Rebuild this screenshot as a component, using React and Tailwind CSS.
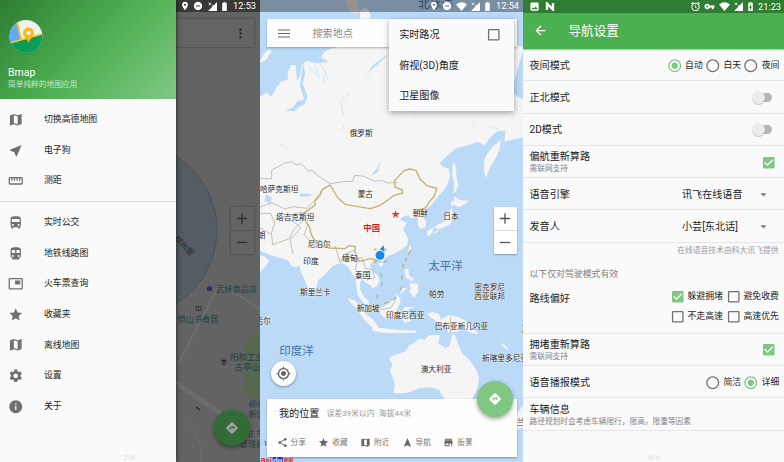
import React from "react";
import {
  MdMap, MdNearMe, MdStraighten, MdDirectionsBus, MdDirectionsSubway, MdPictureInPicture,
  MdStar, MdSettings, MdInfo, MdDirections, MdMyLocation, MdShare, MdNavigation, MdStore,
  MdMoreVert, MdLocationOn, MdDoNotDisturbOn, MdBatteryFull, MdBatteryChargingFull,
  MdAlarm, MdVpnKey, MdImage, MdArrowBack, MdCheckBox, MdCheckBoxOutlineBlank,
  MdRadioButtonChecked, MdRadioButtonUnchecked, MdArrowDropDown,
} from "react-icons/md";

const primaryItems = [
  [MdMap, "切换高德地图"],
  [MdNearMe, "电子狗"],
  [MdStraighten, "测距"],
];
const secondaryItems = [
  [MdDirectionsBus, "实时公交"],
  [MdDirectionsSubway, "地铁线路图"],
  [MdPictureInPicture, "火车票查询"],
  [MdStar, "收藏夹"],
  [MdMap, "离线地图"],
  [MdSettings, "设置"],
  [MdInfo, "关于"],
];

function Signal() {
  return (
    <svg className="h-[9px] w-[9px]" viewBox="0 0 9 9" fill="currentColor">
      <path d="M9 0V9H0L4.3 4.7V3.2H5.8Z" />
      <path d="M.6.6l2.6 2.6M3.2.6L.6 3.2" stroke="currentColor" strokeWidth=".8" />
    </svg>
  );
}

function Wifi() {
  return (
    <svg className="h-[9px] w-[11px]" viewBox="0 0 11 9" fill="currentColor">
      <path d="M0 2.4Q5.5-2 11 2.4L5.5 9Z" />
    </svg>
  );
}

function Plus() {
  return (
    <svg className="h-[23px] w-[12px]" viewBox="0 0 12 23" fill="none" stroke="currentColor" strokeWidth="1.3">
      <path d="M.8 11.500H11.200M6 6.300V16.700" />
    </svg>
  );
}

function Minus() {
  return (
    <svg className="h-[23px] w-[12px]" viewBox="0 0 12 23" fill="none" stroke="currentColor" strokeWidth="1.3">
      <path d="M.8 11.500H11.200" />
    </svg>
  );
}

function DrawerItem({ icon: Icon, label }) {
  return (
    <li className="flex h-[30.600px] items-center pl-[8px]">
      <Icon className="h-[15.500px] w-[15.500px] text-[#707070]" />
      <span className="ml-[20.500px] text-[8.900px] text-[#1c1c1c]">{label}</span>
    </li>
  );
}

function DimMap() {
  return (
    <svg className="absolute inset-0 h-full w-full" viewBox="176 0 84 462" fontSize="8.2">
      <rect x="176" width="84" height="462" fill="#636363" />
      <g stroke="#6d6d6d" fill="none">
        <path d="M176 383L236 424L260 437" strokeWidth="5" />
        <path d="M178 365L198 325L218 287L240 296L260 310" strokeWidth="2" />
        <path d="M180 415Q206 438 200 462" strokeWidth="1" />
      </g>
      <rect x="245" y="334" width="30" height="65" rx="10" fill="#56684f" />
      <circle cx="130" cy="230" r="87" fill="#535d63" stroke="#3c505c" strokeWidth=".8" />
      <text x="0" y="0" transform="translate(174 239) rotate(46)" fill="#2b2b2b" fontSize="8">柳州服</text>
      <g fill="#1f3f49">
        <text x="216" y="292.300">武妹食品店</text>
        <text x="177.500" y="322.300">倚山书香居</text>
        <text x="230" y="359.600" fontSize="8.500">阳和工业</text>
        <text x="234.500" y="370" fontSize="8.500">古亭山</text>
        <text x="248.500" y="407.300">柳州</text>
        <text x="248.500" y="417.300">新区</text>
        <text x="247.500" y="436.500">市市</text>
        <text x="239.500" y="446.500">管理处</text>
      </g>
      <path d="M207 287h5v4h-5z" fill="#352b60" />
      <path d="M208 287q1.500-3 3 0" fill="none" stroke="#352b60" strokeWidth=".8" />
      <circle cx="224" cy="362" r="4.500" fill="#555" stroke="#777" strokeWidth=".5" />
      <path d="M221.500 360h5l-2 2v3h-1v-3z" fill="#222" />
      <path d="M196 306.500h5v4h-5zM198.500 306.500v4" fill="none" stroke="#333" strokeWidth=".9" />
      <path d="M196 407l4 3" stroke="#222" strokeWidth="1.200" />
    </svg>
  );
}

function DrawerScreen() {
  return (
    <section className="flex h-full w-[260px] shrink-0 overflow-hidden">
      <aside className="relative z-10 flex w-[176px] shrink-0 flex-col bg-[#fafafa] shadow-[1px_0_4px_rgba(0,0,0,0.5)]">
        <header className="flex h-[99px] shrink-0 flex-col bg-[linear-gradient(135deg,#2e7d32_0%,#4caf50_50%,#81c784_100%)] pl-[8px] pt-[19px] text-white">
          <svg className="h-[36px] w-[36px]" viewBox="0 0 36 36">
            <defs>
              <clipPath id="logo"><circle cx="18" cy="17.500" r="16.500" /></clipPath>
            </defs>
            <circle cx="18" cy="18.700" r="16.500" fill="#1b5e20" opacity=".25" />
            <g clipPath="url(#logo)">
              <rect width="36" height="36" fill="#f1f1ee" />
              <path d="M0 0H9L14 21L0 25Z" fill="#64a9f1" />
              <path d="M8.500 0L13.500 22" stroke="#fbc928" strokeWidth="1.800" />
              <path d="M0 25L36 14.500V36H0Z" fill="#0b9d55" />
              <path d="M0 24.500L36 14.500" stroke="#fbc928" strokeWidth="1.600" />
            </g>
            <path d="M20.500 24C19.500 20 15 18.500 15 13.800a5.500 5.500 0 0 1 11 0C26 18.500 21.500 20 20.500 24Z" fill="#fbb917" />
            <circle cx="20.500" cy="13.800" r="2.100" fill="#fff" />
          </svg>
          <div className="mt-[11px] text-[10.500px] leading-[13px]">Bmap</div>
          <div className="mt-[0.500px] text-[7.700px] leading-[10px] text-[#c8e6c9]">简单纯粹的地图应用</div>
        </header>
        <ul className="border-b border-[#dcdcdc] pb-[4.700px] pt-[5.600px]">
          {primaryItems.map(([icon, label]) => <DrawerItem key={label} icon={icon} label={label} />)}
        </ul>
        <ul className="pt-[5.500px]">
          {secondaryItems.map(([icon, label]) => <DrawerItem key={label} icon={icon} label={label} />)}
        </ul>
        <div className="mt-auto pl-[123px] text-[8px] leading-[9px] text-[#dedede]">2/6</div>
      </aside>
      <div className="relative flex flex-1 flex-col overflow-hidden">
        <DimMap />
        <div className="relative flex h-[12px] shrink-0 items-center justify-end bg-[#383838] pr-[4px] text-white">
          <MdLocationOn className="h-[10px] w-[10px]" />
          <MdDoNotDisturbOn className="ml-[3px] h-[10px] w-[10px]" />
          <span className="ml-[5px]"><Signal /></span>
          <MdBatteryFull className="ml-[2px] h-[11px] w-[11px]" />
          <span className="ml-[3px] text-[9.200px] leading-none">12:53</span>
        </div>
        <div className="relative mr-[6px] mt-[7px] flex h-[28px] shrink-0 items-center justify-end bg-[#646464] pr-[6.500px] shadow-[0_0_2px_rgba(0,0,0,0.5)]">
          <MdMoreVert className="h-[15px] w-[15px] text-[#292929]" />
        </div>
        <div className="relative ml-[54.500px] mt-[160px] flex h-[47px] w-[23px] shrink-0 flex-col items-center bg-[#646464] text-[#2c2c2c] shadow-[0_0_2px_rgba(0,0,0,0.45)]">
          <Plus />
          <div className="h-px w-full bg-[#555]" />
          <Minus />
        </div>
        <div className="relative ml-[38px] mt-[156px] flex h-[36px] w-[36px] shrink-0 items-center justify-center rounded-full bg-[#326b36] text-[#a0a0a0] shadow-[0_2px_4px_rgba(0,0,0,0.4)]">
          <MdDirections className="h-[14px] w-[14px]" />
        </div>
      </div>
    </section>
  );
}

const countries = [
  [281, 400, "俄罗斯"], [12, 566, "哈萨克斯坦"], [305, 583, "蒙古"], [60, 652, "塔吉克斯坦"],
  [470, 638, "朝鲜"], [562, 649, "日本"], [-18, 706, "伊朗"], [155, 733, "尼泊尔"],
  [258, 773, "缅甸"], [142, 784, "印度"], [297, 826, "泰国"], [132, 877, "斯里兰卡"],
  [519, 881, "帕劳"], [655, 860, "密克罗尼"], [655, 887, "西亚联邦"], [302, 923, "新加坡"],
  [390, 946, "印度尼西亚"], [536, 977, "巴布亚新几内亚"], [678, 1075, "新喀里多尼亚"],
  [494, 1108, "澳大利亚"], [-24, 963, "塞舌尔"], [796, 988, "瓦努阿图"], [737, 1265, "新西兰"],
];
const oceans = [[487, 10, "北冰洋"], [517, 797, "太平洋"], [70, 1053, "印度洋"]];

function AsiaMap() {
  return (
    <svg className="absolute inset-0 h-full w-full" viewBox="12 0 789 1386" preserveAspectRatio="none">
      <rect width="810" height="1390" fill="#bbdaf8" />
      <g fill="#f5f5f5">
        <path d="M0 183L16 178L24 160L42 146L60 128L235 145L300 90L804 140V412L765 420L745 425L748 393L725 392L700 415L688 436L665 426L640 435L600 445L565 475L550 490L560 500L578 506L582 530L572 560L545 592L528 612L513 627L503 632L498 645L510 665L509 681L493 687L486 675L486 655L478 650L465 657L458 645L440 650L432 660L453 668L444 683L440 688L452 706L456 719L454 735L438 748L418 760L399 766L383 778L380 785L367 779L351 784L342 795L347 810L364 826L371 841L365 855L349 866L344 856L327 847L319 835L312 850L313 870L324 890L337 902L340 915L328 914L314 898L304 884L302 860L299 838L288 821L276 801L262 790L248 791L234 796L215 814L203 828L187 840L182 861L176 874L168 882L160 874L145 838L133 812L130 795L122 802L108 799L95 780L70 773L40 764L12 752L0 750Z" />
        <path d="M12 766L28 772L40 781L30 797L12 816L0 820V766Z" />
        <path d="M735 420L730 450L719 475L703 500L690 534L684 516L685 480L693 462L711 438Z" />
        <path d="M590 492L596 488L600 510L602 535L607 555L600 574L593 580L595 548L588 525Z" />
        <path d="M595 588L610 600L640 602L622 615L610 622L592 614L586 620L585 606L593 604ZM588 622L590 648L584 672L566 681L548 688L535 683L542 675L563 666L570 650ZM535 681L526 702L516 710L511 695ZM548 690L540 700L530 697Z" />
        <path d="M460 738L466 739L462 760L456 753ZM369 788L383 790L378 799L367 798ZM446 807L457 807L459 826L475 838L468 844L449 832ZM460 850L486 851L487 873L475 893L458 873L465 868ZM453 865L430 886L439 863Z" />
        <path d="M276 895L298 902L315 920L331 944L347 954L366 978L369 990L347 982L321 955L305 929L284 908Z" />
        <path d="M350 983L378 984L407 988L440 991L481 992L480 998L421 999L376 998L347 991Z" />
        <path d="M370 928L390 914L413 901L421 883L434 898L429 916L419 935L415 953L391 956L375 945Z" />
        <path d="M443 921L475 920L490 915L458 928L454 938L469 941L457 945L466 966L452 964L449 972L438 956L441 940Z" />
        <path d="M514 941L531 936L548 942L556 958L578 945L605 950L638 967L648 982L668 1001L648 1000L620 987L602 996L578 998L565 977L541 968L534 957L522 952Z" />
        <path d="M402 1070L425 1062L448 1054L460 1036L478 1026L491 1015L506 1020L520 1005L553 1005L546 1029L568 1044L580 1039L588 1005L596 1003L607 1034L618 1060L640 1079L661 1110L669 1134L663 1171L647 1198L600 1216L568 1197L558 1187L550 1170L525 1162L492 1164L463 1176L430 1181L413 1179L416 1152L402 1110L410 1092L400 1080Z" />
        <path d="M762 1257L783 1240L801 1217V1280L785 1290ZM740 1030l17 16-5 3-18-18z" />
        <path d="M312 33L322 24L334 26L345 45L340 56L312 56Z" />
      </g>
      <path d="M268 0L303 0L306 20L311 34L304 41L288 37L278 24Z" fill="#e6e0d8" />
      <g fill="#bbdaf8">
        <path d="M40 140H235L205 156L195 174L220 185L180 190L150 182L137 197L131 229L123 244L119 196L105 194L96 215L95 240L75 244L61 265L45 290L32 278L12 290V188L30 180L46 156Z" />
        <path d="M142 190L147 219L140 251L155 290L145 313L126 322L117 333L89 332L112 321L125 303L145 299L132 258L137 216Z" />
        <path d="M399 159L371 188L337 217L348 198L370 181ZM375 482L365 517L342 529L362 507ZM30 583L48 593L43 610L25 603ZM130 580L167 583L165 588L133 591ZM804 140V300L770 280L776 240Z" />
      </g>
      <g fill="none" stroke="#c7dff2" strokeWidth="2">
        <path d="M186 180L208 218L201 251M206 210L217 240M282 277L254 305L264 350M350 210L330 225M67 430L93 446M265 370L260 390M465 330L481 350M647 362L661 378M691 376L730 388M178 195L190 235M153 197L183 225" />
      </g>
      <g fill="none" stroke="#bdb6a6" strokeWidth="2.500" strokeLinejoin="round">
        <path d="M12 536L47 536V510L69 499L83 490L107 485L121 495L136 491L156 514L167 511L197 535L222 551L262 545L290 544L296 526L325 529L353 543L376 542L397 549L425 547M226 554L199 568L187 587L173 605L153 625L110 620L86 627L48 608L12 621M12 640L44 640L56 669L46 700L50 734L100 716L112 690L146 658M61 660L90 650L135 636L156 663M106 660L134 683L102 720L111 763M46 703L12 684M156 672L144 704L174 735M237 737L253 789L261 765L295 751M290 778L318 773L328 805L350 809L356 833L332 840M305 775L298 811M374 930L405 923L422 895M584 950L583 1000M480 630L491 648L507 649" />
      </g>
      <g fill="none" stroke="#bda65b" strokeWidth="4" strokeLinejoin="round" opacity=".85">
        <path d="M222 555L246 594L267 613L307 620L343 626L370 617L392 603L414 586L440 579L438 569L418 562L415 543L444 512L462 507L481 512L492 537L513 557L526 561L543 565L535 588L519 607L510 623L484 631M222 555L199 568L193 585L176 603L178 615L154 632L136 643L149 664L161 681L164 698L172 716L189 735L220 744L266 746L278 737L298 739L296 754L310 785L342 776L362 780L378 782" />
        <path d="M374 820l4 12M378 848l-2 10M363 884l2 12M384 910l14-3M412 900l8-10M434 870l4-10M436 838l3-12M439 805l4-12M448 784l5-11M458 764l5-15" />
      </g>
      <path d="M419 630l3 9h10l-8 6 3 9-8-6-8 6 3-9-8-6h10z" fill="#e23b3b" />
      <g fill="#222" stroke="#fff" strokeWidth="1.500" paintOrder="stroke" fontSize="23">
        {countries.map(([x, y, name]) => <text key={name} x={x} y={y + 8.5}>{name}</text>)}
        <text x="22" y="1337">1</text>
      </g>
      <text x="322" y="692" fontSize="25" fontWeight="700" fill="#d41f26">中国</text>
      <g fill="#4673a5" fontSize="34.500">
        {oceans.map(([x, y, name]) => <text key={name} x={x} y={y + 12.5}>{name}</text>)}
      </g>
      <path d="M383 736l3 24-20-6z" fill="#1e88e5" />
      <circle cx="372" cy="766" r="15" fill="#1687ef" stroke="#fff" strokeWidth="3" />
      <path d="M356 752v-5h6M390 752v-5h-6M356 781v5h6M390 781v5h-6" fill="none" stroke="#c39b55" strokeWidth="3" />
      <g fontSize="23" fontWeight="700">
        <text x="14" y="1389" fill="#df2f36">Bai</text>
        <rect x="50" y="1371" width="31" height="16" rx="4" fill="#3b45cf" />
        <text x="52" y="1389" fill="#e4e6fa">du</text>
        <text x="82" y="1387" fill="#df2f36" fontSize="15">地图</text>
      </g>
    </svg>
  );
}

const actions = [
  [MdShare, "分享"], [MdStar, "收藏"], [MdMap, "附近"], [MdNavigation, "导航"], [MdStore, "街景"],
];

function MapScreen() {
  return (
    <section className="relative flex h-full w-[263px] shrink-0 flex-col overflow-hidden">
      <AsiaMap />
      <div className="relative flex h-[12px] shrink-0 items-center justify-end bg-black/35 pr-[4px] text-white">
        <MdLocationOn className="h-[10px] w-[10px]" />
        <MdDoNotDisturbOn className="ml-[3px] h-[10px] w-[10px]" />
        <span className="ml-[4px]"><Wifi /></span>
        <span className="ml-[4px]"><Signal /></span>
        <MdBatteryFull className="ml-[2px] h-[11px] w-[11px]" />
        <span className="ml-[3px] text-[9.200px] leading-none">12:54</span>
      </div>
      <div className="relative ml-[6.500px] mt-[7px] flex h-[28px] w-[250px] shrink-0 items-center bg-[#fefefe] pl-[11.500px] shadow-[0_1px_2px_rgba(0,0,0,0.3)]">
        <svg className="h-[9px] w-[12px]" viewBox="0 0 12 9" fill="none" stroke="#666" strokeWidth="1.100">
          <path d="M0 1H12M0 4.500H12M0 8H12" />
        </svg>
        <span className="ml-[22.500px] pt-[1px] text-[10.100px] text-[#8c8c8c]">搜索地点</span>
      </div>
      <div className="relative ml-[233.500px] mt-[160px] flex h-[47px] w-[23px] shrink-0 flex-col items-center rounded-[1px] bg-white text-[#555] shadow-[0_1px_2px_rgba(0,0,0,0.3)]">
        <Plus />
        <div className="h-px w-full bg-[#ddd]" />
        <Minus />
      </div>
      <div className="relative ml-[10.500px] mt-[106.500px] flex h-[25px] w-[25px] shrink-0 items-center justify-center rounded-full bg-white text-[#666] shadow-[0_1px_3px_rgba(0,0,0,0.35)]">
        <MdMyLocation className="h-[15px] w-[15px]" />
      </div>
      <div className="relative ml-[6.500px] mt-[13.500px] flex h-[58px] w-[250px] shrink-0 flex-col bg-[#fefefe] shadow-[0_1px_2px_rgba(0,0,0,0.35)]">
        <div className="flex items-center pl-[12.500px] pt-[6px] leading-[15px]">
          <span className="text-[10.100px] text-[#222]">我的位置</span>
          <span className="ml-[7px] whitespace-pre pt-[1px] text-[7.900px] text-[#999]">误差39米以内  海拔44米</span>
        </div>
        <div className="mt-[14.500px] flex pl-[10px] leading-[14px]">
          {actions.map(([Icon, label]) => (
            <div key={label} className="flex w-[41.700px] items-center">
              <Icon className="h-[11px] w-[11px] text-[#666]" />
              <span className="ml-[3px] text-[7.700px] text-[#777]">{label}</span>
            </div>
          ))}
        </div>
      </div>
      <div className="absolute left-[217px] top-[380.500px] flex h-[36px] w-[36px] items-center justify-center rounded-full bg-[#81c784] text-white shadow-[0_2px_4px_rgba(0,0,0,0.35)]">
        <MdDirections className="h-[14px] w-[14px]" />
      </div>
      <div className="absolute left-[128.700px] top-[19px] flex h-[92px] w-[125.800px] flex-col bg-[#fafafa] pl-[10.500px] text-[10.100px] text-[#222] shadow-[0_2px_6px_rgba(0,0,0,0.35)]">
        <div className="flex h-[30.600px] items-center justify-between pr-[13px]">
          <span className="pt-[1px]">实时路况</span>
          <MdCheckBoxOutlineBlank className="h-[15.500px] w-[15.500px] text-[#707070]" />
        </div>
        <div className="flex h-[30.600px] items-center pt-[1px]">俯视(3D)角度</div>
        <div className="flex h-[30.600px] items-center pt-[1px]">卫星图像</div>
      </div>
    </section>
  );
}

function Radio({ on, label }) {
  return (
    <span className="flex items-center">
      {on
        ? <MdRadioButtonChecked className="h-[15.500px] w-[15.500px] text-[#81c784]" />
        : <MdRadioButtonUnchecked className="h-[15.500px] w-[15.500px] text-[#707070]" />}
      <span className="ml-[3px] w-[19.800px] whitespace-nowrap text-[8.800px]">{label}</span>
    </span>
  );
}

function Check({ on, label }) {
  return (
    <span className="flex items-center">
      {on
        ? <MdCheckBox className="h-[15.500px] w-[15.500px] text-[#81c784]" />
        : <MdCheckBoxOutlineBlank className="h-[15.500px] w-[15.500px] text-[#707070]" />}
      {label && <span className="ml-[2.500px] w-[38px] whitespace-nowrap text-[8.900px]">{label}</span>}
    </span>
  );
}

function Toggle() {
  return (
    <span className="mr-[12.500px] flex h-[13px] w-[20px] items-center">
      <span className="relative h-[13px] w-[13px] shrink-0 rounded-full bg-[#ececec] shadow-[0_1px_1px_rgba(0,0,0,0.2)]" />
      <span className="-ml-[3px] h-[9px] w-[10px] shrink-0 rounded-r-full bg-[#b4b4b4]" />
    </span>
  );
}

function Row({ title, note, children }) {
  return (
    <div className="flex h-[32.300px] shrink-0 items-center justify-between border-b border-[#e6e6e6] pl-[6.500px] pt-[1.500px]">
      <div>
        <div className={note ? "text-[10.100px] leading-[13px]" : "text-[10.100px]"}>{title}</div>
        {note && <div className="text-[7.700px] leading-[11px] text-[#858585]">{note}</div>}
      </div>
      {children}
    </div>
  );
}

function Picker({ value }) {
  return (
    <span className="flex w-[102px] items-center text-[10.100px]">
      <span className="w-[73.500px]">{value}</span>
      <MdArrowDropDown className="h-[15px] w-[15px] text-[#777]" />
    </span>
  );
}

function SettingsScreen() {
  return (
    <section className="flex h-full w-[261px] shrink-0 flex-col overflow-hidden bg-[#fafafa] text-[#1c1c1c]">
      <div className="flex h-[12.500px] shrink-0 items-center bg-[#2e7d32] pl-[6px] pr-[3px] text-white">
        <MdImage className="h-[11px] w-[11px]" />
        <svg className="ml-[5px] h-[9px] w-[10px]" viewBox="0 0 10 9">
          <path d="M2 8V1.500L8 7.500V1" fill="none" stroke="currentColor" strokeWidth="2.400" />
        </svg>
        <MdAlarm className="ml-auto h-[11px] w-[11px]" />
        <MdVpnKey className="ml-[3px] h-[11px] w-[11px]" />
        <span className="ml-[4px]"><Wifi /></span>
        <span className="ml-[4px]"><Signal /></span>
        <MdBatteryChargingFull className="ml-[2px] h-[11px] w-[11px]" />
        <span className="ml-[2px] text-[9.200px] leading-none">21:23</span>
      </div>
      <header className="relative flex h-[36px] shrink-0 items-center bg-[#4caf50] pl-[10px] text-white shadow-[0_1px_2px_rgba(0,0,0,0.3)]">
        <MdArrowBack className="h-[15px] w-[15px]" />
        <h1 className="ml-[20.500px] pt-[1px] text-[12.600px]">导航设置</h1>
      </header>
      <div className="h-[0.500px] shrink-0" />
      <Row title="夜间模式">
        <div className="flex pr-[2.500px]">
          <Radio on label="自动" /><Radio label="白天" /><Radio label="夜间" />
        </div>
      </Row>
      <Row title="正北模式"><Toggle /></Row>
      <Row title="2D模式"><Toggle /></Row>
      <Row title="偏航重新算路" note="需联网支持"><span className="pr-[8px]"><Check on /></span></Row>
      <Row title="语音引擎"><Picker value="讯飞在线语音" /></Row>
      <Row title="发音人"><Picker value="小芸[东北话]" /></Row>
      <div className="h-[15px] shrink-0 pr-[5.500px] text-right text-[7.800px] leading-[15px] text-[#999]">在线语音技术由科大讯飞提供</div>
      <div className="mt-[9px] h-[15px] shrink-0 pl-[6.500px] text-[8.900px] leading-[15px] text-[#808080]">以下仅对驾驶模式有效</div>
      <div className="flex h-[52px] shrink-0 justify-between border-b border-[#e6e6e6] pl-[6.500px]">
        <div className="pt-[9.500px] text-[10.100px] leading-[15px]">路线偏好</div>
        <div className="flex flex-col gap-[5px] pr-[2.500px] pt-[7px]">
          <div className="flex h-[15.500px] items-center"><Check on label="躲避拥堵" /><Check label="避免收费" /></div>
          <div className="flex h-[15.500px] items-center"><Check label="不走高速" /><Check label="高速优先" /></div>
        </div>
      </div>
      <Row title="拥堵重新算路" note="需联网支持"><span className="pr-[8px]"><Check on /></span></Row>
      <Row title="语音播报模式">
        <div className="flex pr-[2.500px]"><Radio label="简洁" /><Radio on label="详细" /></div>
      </Row>
      <Row title="车辆信息" note="路径规划时会考虑车辆限行，限高，限重等因素" />
      <div className="mt-auto pl-[125px] text-[8px] leading-[9px] text-[#dedede]">6/6</div>
    </section>
  );
}

export default function App() {
  return (
    <main lang="zh-CN" className="flex h-[462px] w-[784px] overflow-hidden bg-[#fafafa] font-['Roboto','Noto_Sans_CJK_SC',sans-serif]">
      <DrawerScreen />
      <MapScreen />
      <SettingsScreen />
    </main>
  );
}
